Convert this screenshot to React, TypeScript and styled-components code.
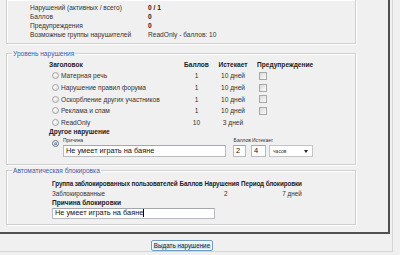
import React from 'react';
import styled, { createGlobalStyle, css } from 'styled-components';

const GlobalStyle = createGlobalStyle`
  html, body {
    margin: 0;
    padding: 0;
    background: #f0f0f0;
  }
  body {
    font-family: 'Liberation Sans', Arial, sans-serif;
    font-size: 6.6px;
    color: #333;
  }
`;

const stats = [
  { label: 'Нарушений (активных / всего)', value: '0 / 1', strong: true },
  { label: 'Баллов', value: '0', strong: true },
  { label: 'Предупреждения', value: '0', strong: true },
  { label: 'Возможные группы нарушителей', value: 'ReadOnly - баллов: 10', strong: false },
];

const levels = [
  { title: 'Матерная речь', points: 1, expires: '10 дней', warn: true },
  { title: 'Нарушение правил форума', points: 1, expires: '10 дней', warn: true },
  { title: 'Оскорбление других участников', points: 1, expires: '10 дней', warn: true },
  { title: 'Реклама и спам', points: 1, expires: '10 дней', warn: true },
  { title: 'ReadOnly', points: 10, expires: '3 дней', warn: false },
];

const reason = 'Не умеет играть на баяне';

const App = () => {
  return (
    <>
      <GlobalStyle />
      <Page>
        <Frame>
          <StatsBox>
            {stats.map((s) => (
              <React.Fragment key={s.label}>
                <StatLabel>{s.label}</StatLabel>
                <StatValue $strong={s.strong}>{s.value}</StatValue>
              </React.Fragment>
            ))}
          </StatsBox>

          <Group $gap={5}>
            <Legend>Уровень нарушения</Legend>
            <LevelBody>
              <LevelGrid>
                <HeadCell>Заголовок</HeadCell>
                <HeadCell $align='center'>Баллов</HeadCell>
                <HeadCell $align='center'>Истекает</HeadCell>
                <HeadCell $pad={1}>Предупреждение</HeadCell>
                {levels.map((l) => (
                  <React.Fragment key={l.title}>
                    <TitleCell>
                      <Radio />
                      {l.title}
                    </TitleCell>
                    <Cell $align='center'>{l.points}</Cell>
                    <Cell $align='center'>{l.expires}</Cell>
                    <Cell $pad={3}>{l.warn && <Checkbox />}</Cell>
                  </React.Fragment>
                ))}
              </LevelGrid>
              <SubTitle>Другое нарушение</SubTitle>
              <OtherRow>
                <Radio $checked />
                <Field $width={163}>
                  <FieldLabel>Причина</FieldLabel>
                  <TextBox>{reason}</TextBox>
                </Field>
                <Field $width={18} $offset={7}>
                  <FieldLabel $align='right'>Баллов</FieldLabel>
                  <TextBox $width={13}>2</TextBox>
                </Field>
                <Field $width={62}>
                  <FieldLabel $pad={1}>Истекает</FieldLabel>
                  <InputRow>
                    <TextBox $width={15}>4</TextBox>
                    <Select>
                      часов
                      <Arrow />
                    </Select>
                  </InputRow>
                </Field>
              </OtherRow>
            </LevelBody>
          </Group>

          <Group $gap={1} $bottom={5}>
            <Legend>Автоматическая блокировка</Legend>
            <BlockBody>
              <BlockTable>
                <thead>
                  <tr>
                    <BlockHead>Группа заблокированных пользователей</BlockHead>
                    <BlockHead>Баллов</BlockHead>
                    <BlockHead>Нарушения</BlockHead>
                    <BlockHead>Период блокировки</BlockHead>
                  </tr>
                </thead>
                <tbody>
                  <tr>
                    <BlockCell>Заблокированные</BlockCell>
                    <BlockCell />
                    <BlockCell $align='center' $pad={8}>2</BlockCell>
                    <BlockCell $align='right'>7 дней</BlockCell>
                  </tr>
                </tbody>
              </BlockTable>
              <SubTitle $height={9.5}>Причина блокировки</SubTitle>
              <TextBox $width={163} $height={11}>
                {reason}
                <Caret />
              </TextBox>
            </BlockBody>
          </Group>
        </Frame>
        <Footer>
          <SubmitButton>Выдать нарушение</SubmitButton>
        </Footer>
      </Page>
    </>
  );
};

const Page = styled.div`
  width: 392px;
  height: 251px;
  border-right: 1px solid #d4d4d4;
  border-bottom: 1px solid #d4d4d4;
  background: #f0f0f0;
`;

const Frame = styled.div`
  width: 350px;
  height: 232px;
  padding: 0 32px 0 6px;
  border-right: 2px solid #505050;
  border-bottom: 2px solid #505050;
`;

const groove = css`
  border: 1px solid #cfcfcf;
  box-shadow: 1px 1px 0 #fff, inset 1px 1px 0 #fff;
`;

const StatsBox = styled.div`
  ${groove};
  border-top: none;
  display: grid;
  grid-template-columns: 118px auto;
  grid-auto-rows: 9px;
  align-items: center;
  padding: 3px 0 4px 23px;
`;

const StatLabel = styled.div`
  white-space: nowrap;
`;

const StatValue = styled.div<{ $strong?: boolean }>`
  white-space: nowrap;
  font-weight: ${(p) => (p.$strong ? 700 : 400)};
  color: ${(p) => (p.$strong ? '#222' : '#333')};
`;

const Group = styled.fieldset<{ $gap: number; $bottom?: number }>`
  ${groove};
  min-width: 0;
  margin: ${(p) => p.$gap}px 0 0 0;
  padding: 0 0 ${(p) => p.$bottom ?? 7}px 0;
`;

const Legend = styled.legend`
  margin-left: 5px;
  padding: 0 1px;
  height: 9px;
  line-height: 9px;
  color: #3d57a6;
`;

const LevelBody = styled.div`
  padding: 1px 0 0 42px;
`;

const LevelGrid = styled.div`
  display: grid;
  grid-template-columns: 134px 27px 46px auto;
  grid-template-rows: 11px;
  grid-auto-rows: 11.7px;
  align-items: center;
`;

const HeadCell = styled.div<{ $align?: string; $pad?: number }>`
  font-weight: 700;
  color: #222;
  white-space: nowrap;
  text-align: ${(p) => p.$align ?? 'left'};
  padding-left: ${(p) => p.$pad ?? 0}px;
`;

const Cell = styled.div<{ $align?: string; $pad?: number }>`
  white-space: nowrap;
  display: flex;
  justify-content: ${(p) => (p.$align === 'center' ? 'center' : 'flex-start')};
  align-items: center;
  padding-left: ${(p) => p.$pad ?? 0}px;
`;

const TitleCell = styled.div`
  display: flex;
  align-items: center;
  gap: 2px;
  padding-left: 3px;
  white-space: nowrap;
`;

const Radio = styled.span<{ $checked?: boolean }>`
  position: relative;
  flex: none;
  width: 5px;
  height: 5px;
  border-radius: 50%;
  border: 1px solid #a4a4a4;
  background: radial-gradient(circle at 40% 35%, #ffffff, #d8d8d8);
  ${(p) =>
    p.$checked &&
    css`
      border-color: #6d7a88;
      &::after {
        content: '';
        position: absolute;
        inset: 1px;
        border-radius: 50%;
        background: radial-gradient(circle at 40% 35%, #a9d8f7, #1d4f93);
      }
    `}
`;

const Checkbox = styled.span`
  width: 6px;
  height: 6px;
  border: 1px solid #a8a8a8;
  background: linear-gradient(135deg, #dadada, #fbfbfb);
`;

const SubTitle = styled.div<{ $height?: number }>`
  font-weight: 700;
  color: #222;
  height: ${(p) => p.$height ?? 8}px;
  line-height: ${(p) => p.$height ?? 8}px;
  white-space: nowrap;
`;

const OtherRow = styled.div`
  display: flex;
  align-items: flex-start;
  padding-left: 3px;
  & > ${Radio} {
    margin: 4px 4px 0 0;
  }
`;

const Field = styled.div<{ $width: number; $offset?: number }>`
  display: flex;
  flex-direction: column;
  width: ${(p) => p.$width}px;
  margin-left: ${(p) => p.$offset ?? 0}px;
`;

const FieldLabel = styled.div<{ $align?: string; $pad?: number }>`
  height: 9px;
  line-height: 8px;
  font-size: 5px;
  white-space: nowrap;
  text-align: ${(p) => p.$align ?? 'left'};
  padding-left: ${(p) => p.$pad ?? 0}px;
`;

const TextBox = styled.div<{ $width?: number; $height?: number }>`
  box-sizing: border-box;
  width: ${(p) => (p.$width ? `${p.$width}px` : '100%')};
  height: ${(p) => p.$height ?? 12}px;
  border: 1px solid #b8bcc2;
  border-top-color: #a4a8ae;
  background: #fff;
  padding-left: 2px;
  font-size: 7.4px;
  line-height: 10px;
  color: #111;
  white-space: nowrap;
  overflow: hidden;
  display: flex;
  align-items: center;
`;

const Caret = styled.span`
  width: 1px;
  height: 8px;
  background: #000;
`;

const InputRow = styled.div`
  display: flex;
  gap: 3px;
`;

const Select = styled.div`
  position: relative;
  box-sizing: border-box;
  width: 44px;
  height: 12px;
  border: 1px solid #c4c4c4;
  background: #fff;
  padding-left: 3px;
  font-size: 5px;
  line-height: 10px;
  color: #333;
`;

const Arrow = styled.span`
  position: absolute;
  right: 4px;
  top: 4px;
  border-left: 2px solid transparent;
  border-right: 2px solid transparent;
  border-top: 3px solid #222;
`;

const BlockBody = styled.div`
  padding: 4px 0 0 45px;
`;

const BlockTable = styled.table`
  border-collapse: collapse;
  font-size: 6.3px;
`;

const BlockHead = styled.th`
  padding: 0 2px 0 0;
  height: 9px;
  font-weight: 700;
  color: #222;
  text-align: left;
  white-space: nowrap;
  letter-spacing: -0.1px;
`;

const BlockCell = styled.td<{ $align?: string; $pad?: number }>`
  padding: 0 2px 0 ${(p) => p.$pad ?? 0}px;
  height: 10px;
  text-align: ${(p) => p.$align ?? 'left'};
  white-space: nowrap;
`;

const Footer = styled.div`
  padding: 6px 0 0 151px;
`;

const SubmitButton = styled.button`
  box-sizing: border-box;
  width: 62px;
  height: 11px;
  padding: 0;
  border: 1px solid #6f9cc2;
  border-radius: 2px;
  background: linear-gradient(#f4f9fd, #dcecf8 50%, #c9e2f5 51%, #d9ebf8);
  box-shadow: inset 0 0 0 1px #f8fcff;
  font-family: 'Liberation Sans', Arial, sans-serif;
  font-size: 6.3px;
  line-height: 9px;
  color: #222;
`;

export default App;
